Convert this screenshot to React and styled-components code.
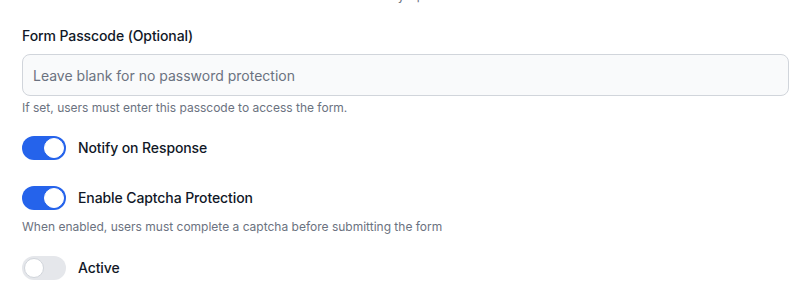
import React, { useState } from "react";
import styled, { createGlobalStyle } from "styled-components";

const GlobalStyle = createGlobalStyle`
  html, body {
    margin: 0;
    padding: 0;
    background: #ffffff;
    overflow: hidden;
  }
  body {
    font-family: "Inter", "Noto Sans", "Liberation Sans", sans-serif;
    -webkit-font-smoothing: antialiased;
  }
`;

// Settings form wrapper
const Page = styled.div`
  display: flex;
  flex-direction: column;
  padding: 0 20px 0 22px;
`;

const PoweredBy = styled.div`
  margin-top: -12px;
  font-size: 12px;
  line-height: 16px;
  color: #6b7280;
  text-align: center;
`;

const Group = styled.div`
  display: flex;
  flex-direction: column;
  margin-top: ${(p) => p.$mt || 0}px;
`;

const Label = styled.label`
  font-size: 14px;
  line-height: 20px;
  font-weight: 500;
  letter-spacing: -0.1px;
  color: #111827;
  margin-bottom: 8px;
`;

const Input = styled.input`
  box-sizing: border-box;
  width: 100%;
  height: 42px;
  padding: 0 10px;
  font-family: inherit;
  font-size: 14px;
  color: #111827;
  background: #f9fafb;
  border: 1px solid #d1d5db;
  border-radius: 8px;
  outline: none;

  &::placeholder {
    color: #6b7280;
  }
`;

const Help = styled.p`
  margin: ${(p) => p.$mt || 0}px 0 0;
  font-size: 12px;
  line-height: 16px;
  color: #6b7280;
`;

const ToggleRow = styled.label`
  display: flex;
  align-items: center;
  gap: 12px;
  cursor: pointer;
`;

const Track = styled.span`
  position: relative;
  box-sizing: border-box;
  flex-shrink: 0;
  width: 44px;
  height: 24px;
  border-radius: 999px;
  background: ${(p) => (p.$on ? "#2563eb" : "#e5e7eb")};
  transition: background 0.15s;
`;

const Knob = styled.span`
  position: absolute;
  top: 2px;
  left: ${(p) => (p.$on ? "22px" : "2px")};
  box-sizing: border-box;
  width: 20px;
  height: 20px;
  border-radius: 50%;
  background: #ffffff;
  border: 1px solid ${(p) => (p.$on ? "#ffffff" : "#d1d5db")};
  transition: left 0.15s;
`;

const ToggleText = styled.span`
  font-size: 14px;
  line-height: 20px;
  font-weight: 500;
  letter-spacing: -0.1px;
  color: #111827;
`;

const Toggle = ({ on, onChange, children }) => (
  <ToggleRow onClick={() => onChange(!on)}>
    <Track $on={on}>
      <Knob $on={on} />
    </Track>
    <ToggleText>{children}</ToggleText>
  </ToggleRow>
);

const App = () => {
  const [notify, setNotify] = useState(true);
  const [captcha, setCaptcha] = useState(true);
  const [active, setActive] = useState(false);

  return (
    <>
      <GlobalStyle />
      <Page>
        <PoweredBy>Powered by Uploadcare</PoweredBy>

        <Group $mt={22}>
          <Label>Form Passcode (Optional)</Label>
          <Input placeholder="Leave blank for no password protection" />
          <Help $mt={4}>
            If set, users must enter this passcode to access the form.
          </Help>
        </Group>

        <Group $mt={20}>
          <Toggle on={notify} onChange={setNotify}>
            Notify on Response
          </Toggle>
        </Group>

        <Group $mt={26}>
          <Toggle on={captcha} onChange={setCaptcha}>
            Enable Captcha Protection
          </Toggle>
          <Help $mt={9}>
            When enabled, users must complete a captcha before submitting the
            form
          </Help>
        </Group>

        <Group $mt={21}>
          <Toggle on={active} onChange={setActive}>
            Active
          </Toggle>
        </Group>
      </Page>
    </>
  );
};

export default App;
